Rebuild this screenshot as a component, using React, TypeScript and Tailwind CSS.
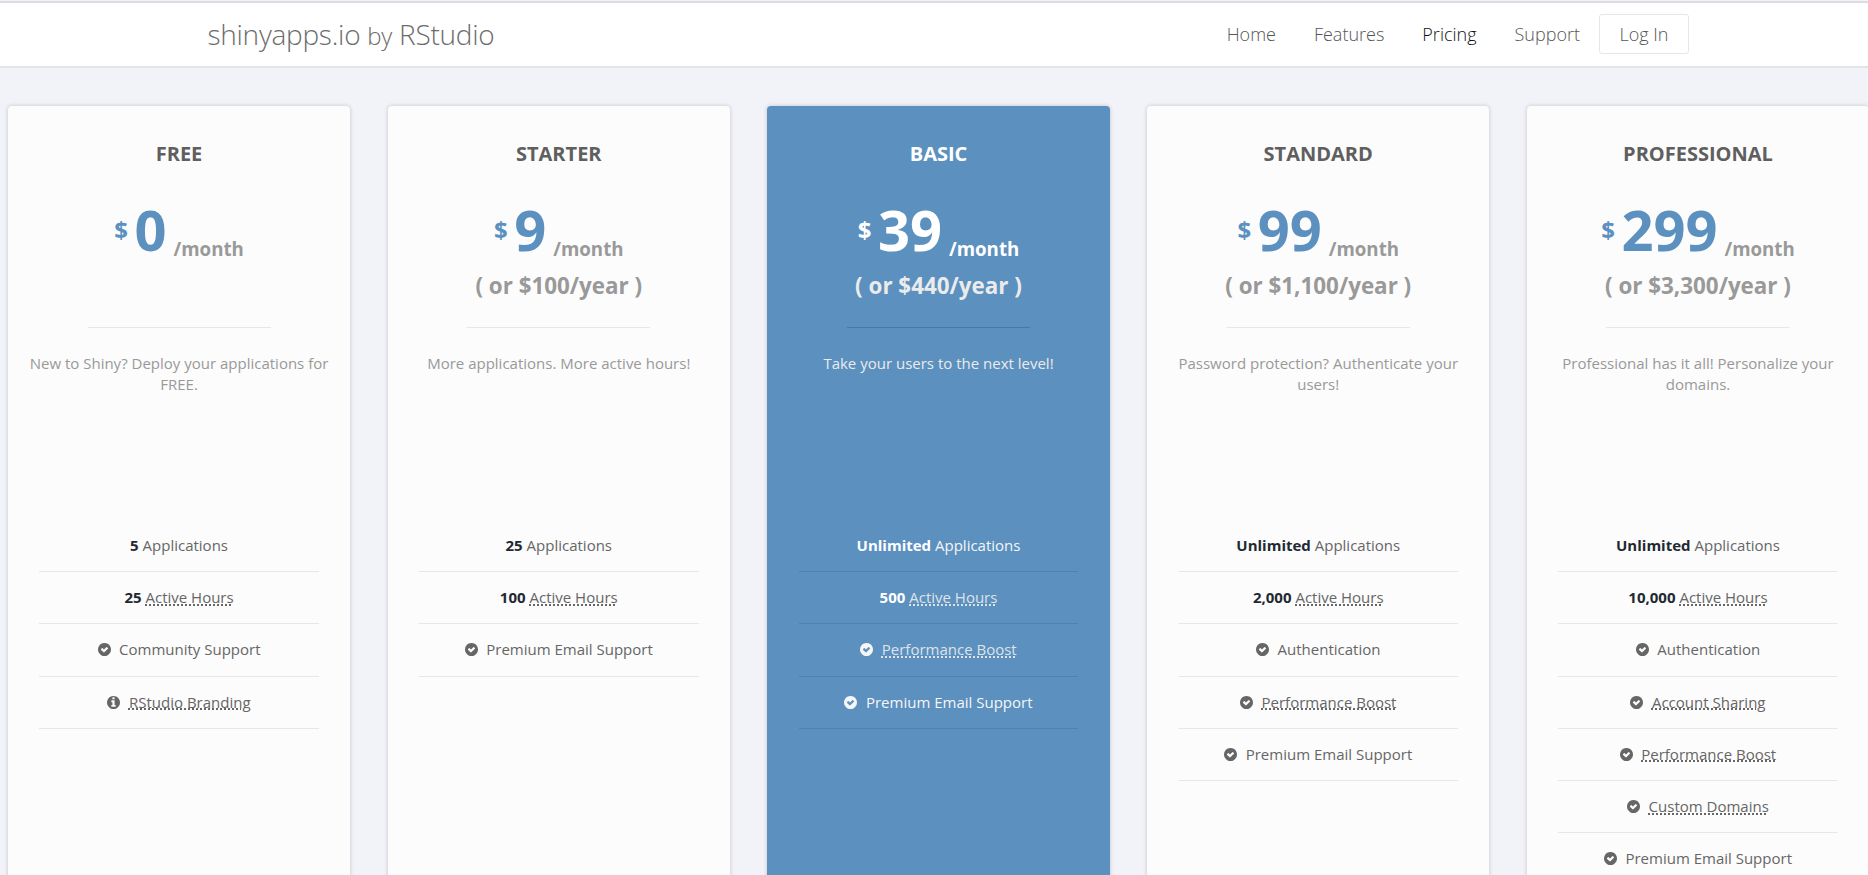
import React from "react";

const DISC =
  "M1664 896q0 209-103 385.5t-279.5 279.5-385.5 103-385.5-103-279.5-279.5-103-385.5 103-385.5 279.5-279.5 385.5-103 385.5 103 279.5 279.5 103 385.5z";
const CHECK =
  "M1299 813l-422 422q-19 19-45 19t-45-19l-294-294q-19-19-19-45t19-45l102-102q19-19 45-19t45 19l147 147 275-275q19-19 45-19t45 19l102 102q19 19 19 45t-19 45z";
const INFO =
  "M1152 1376v-160q0-14-9-23t-23-9h-96v-512q0-14-9-23t-23-9h-320q-14 0-23 9t-9 23v160q0 14 9 23t23 9h96v320h-96q-14 0-23 9t-9 23v160q0 14 9 23t23 9h448q14 0 23-9t9-23zM1024 480v-160q0-14-9-23t-23-9h-192q-14 0-23 9t-9 23v160q0 14 9 23t23 9h192q14 0 23-9t9-23z";

type Feature = {
  label: string;
  amount?: string;
  icon?: "check" | "info";
  hint?: boolean;
};

type Plan = {
  name: string;
  price: string;
  yearly?: string;
  blurb: string;
  featured?: boolean;
  features: Feature[];
};

const email: Feature = { label: "Premium Email Support", icon: "check" };
const boost: Feature = { label: "Performance Boost", icon: "check", hint: true };
const auth: Feature = { label: "Authentication", icon: "check" };
const apps = (amount: string): Feature => ({ amount, label: "Applications" });
const hours = (amount: string): Feature => ({ amount, label: "Active Hours", hint: true });

const plans: Plan[] = [
  {
    name: "FREE",
    price: "0",
    blurb: "New to Shiny? Deploy your applications for FREE.",
    features: [
      apps("5"),
      hours("25"),
      { label: "Community Support", icon: "check" },
      { label: "RStudio Branding", icon: "info", hint: true },
    ],
  },
  {
    name: "STARTER",
    price: "9",
    yearly: "( or $100/year )",
    blurb: "More applications. More active hours!",
    features: [apps("25"), hours("100"), email],
  },
  {
    name: "BASIC",
    price: "39",
    yearly: "( or $440/year )",
    blurb: "Take your users to the next level!",
    featured: true,
    features: [apps("Unlimited"), hours("500"), boost, email],
  },
  {
    name: "STANDARD",
    price: "99",
    yearly: "( or $1,100/year )",
    blurb: "Password protection? Authenticate your users!",
    features: [apps("Unlimited"), hours("2,000"), auth, boost, email],
  },
  {
    name: "PROFESSIONAL",
    price: "299",
    yearly: "( or $3,300/year )",
    blurb: "Professional has it all! Personalize your domains.",
    features: [
      apps("Unlimited"),
      hours("10,000"),
      auth,
      { label: "Account Sharing", icon: "check", hint: true },
      boost,
      { label: "Custom Domains", icon: "check", hint: true },
      email,
    ],
  },
];

function FeatureIcon({ kind }: { kind: "check" | "info" }) {
  return (
    <svg viewBox="128 128 1536 1536" className="mr-[8.5px] size-[13px] shrink-0" fill="currentColor" fillRule="evenodd">
      <path d={DISC + (kind === "check" ? CHECK : INFO)} />
    </svg>
  );
}

function FeatureRow({ feature, featured }: { feature: Feature; featured?: boolean }) {
  return (
    <li
      className={`flex h-[52.2px] items-center justify-center border-b ${
        featured ? "border-[#4f82b0] text-[#f6f6f6]" : "border-[#e7e7e7] text-[#666]"
      }`}
    >
      {feature.icon && <FeatureIcon kind={feature.icon} />}
      <span>
        {feature.amount && (
          <b className={featured ? "font-bold text-white" : "font-bold text-[#1f2933]"}>{feature.amount} </b>
        )}
        <span
          className={
            feature.hint
              ? `underline decoration-dotted decoration-2 underline-offset-1 ${featured ? "text-[#dfe3e8]" : ""}`
              : ""
          }
        >
          {feature.label}
        </span>
      </span>
    </li>
  );
}

function PlanCard({ plan }: { plan: Plan }) {
  const f = plan.featured;
  return (
    <section
      className={`flex h-[900px] w-[342.3px] shrink-0 flex-col items-center rounded-[4px] text-center shadow-[0_0_4px_rgba(0,0,0,0.2)] ${
        f ? "bg-[#5b90bf]" : "bg-[#fcfcfc]"
      }`}
    >
      <h2 className={`mt-[34px] text-[20px] leading-[28px] font-bold ${f ? "text-white" : "text-[#5f5f5f]"}`}>
        {plan.name}
      </h2>
      <div className="mt-[21px] flex h-[80px] items-start">
        <span className={`mt-[24px] text-[24px] leading-[34px] font-bold ${f ? "text-white" : "text-[#5b90bf]"}`}>$</span>
        <span className={`ml-[6.5px] text-[56px] leading-[80px] font-bold ${f ? "text-white" : "text-[#5b90bf]"}`}>
          {plan.price}
        </span>
        <span className={`mt-[46px] ml-[7px] text-[18.7px] leading-[28px] font-bold ${f ? "text-white" : "text-[#999]"}`}>
          /month
        </span>
      </div>
      <div className={`h-[34px] text-[22.4px] leading-[34px] font-bold ${f ? "text-[#ebebeb]" : "text-[#999]"}`}>
        {plan.yearly}
      </div>
      <div className={`mt-[24px] h-px w-[183px] shrink-0 ${f ? "bg-[#4878a4]" : "bg-[#e7e7e7]"}`} />
      <p className={`mt-[25px] h-[160px] w-[308px] text-[15px] leading-[21px] ${f ? "text-[#ebebeb]" : "text-[#999]"}`}>
        {plan.blurb}
      </p>
      <ul className="mt-[7px] w-[279.6px] text-[15px] leading-[21px]">
        {plan.features.map((feature) => (
          <FeatureRow key={feature.label} feature={feature} featured={f} />
        ))}
      </ul>
    </section>
  );
}

export default function App() {
  return (
    <div className="flex h-[875px] w-[1868px] flex-col overflow-hidden bg-[#f2f3f8] font-['Open_Sans',sans-serif]">
      <header className="mt-px flex h-[67px] shrink-0 justify-between border-t-2 border-b-2 border-t-[#dcdde3] border-b-[#e3e4e8] bg-white pr-[179px] pl-[207.5px]">
        <div className="mt-[11px] text-[28px] leading-[40px] font-light tracking-[-0.26px] text-[#6c6c6c]">
          shinyapps.io <span className="text-[24px]">by</span> RStudio
        </div>
        <nav className="mt-[11px] flex h-[40px] items-center text-[18px] font-light text-[#555]">
          <a className="px-[19px]">Home</a>
          <a className="px-[19px]">Features</a>
          <a className="px-[19px] text-[#111]">Pricing</a>
          <a className="px-[19px]">Support</a>
          <a className="flex h-[40px] w-[90px] items-center justify-center rounded-[3px] border border-[#e7e7e7]">Log In</a>
        </nav>
      </header>
      <main className="mt-[38px] ml-[7.9px] flex gap-[37.45px]">
        {plans.map((plan) => (
          <PlanCard key={plan.name} plan={plan} />
        ))}
      </main>
    </div>
  );
}
